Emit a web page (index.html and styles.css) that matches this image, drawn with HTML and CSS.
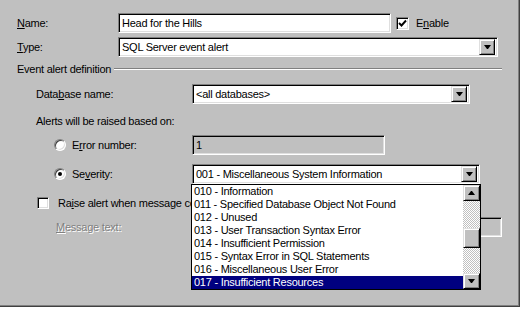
FILE: index.html
```html
<!DOCTYPE html>
<html>
<head>
<meta charset="utf-8">
<link rel="stylesheet" href="styles.css">
</head>
<body>
<div class="dialog">
  <div class="row row-name">
    <span class="lbl lbl-top"><u>N</u>ame:</span>
    <div class="field name-field">Head for the Hills</div>
    <span class="check enable-check"><svg width="9" height="9" viewBox="0 0 9 9"><path d="M1 4 L3.5 6.5 L8 1.5" fill="none" stroke="#000" stroke-width="1.9"/></svg></span>
    <span class="check-label">E<u>n</u>able</span>
  </div>
  <div class="row row-type">
    <span class="lbl lbl-top"><u>T</u>ype:</span>
    <div class="combo type-combo"><span class="combo-text">SQL Server event alert</span><span class="drop-btn"><svg width="7" height="4" viewBox="0 0 7 4"><polygon points="0,0 7,0 4,4 3,4" fill="#000"/></svg></span></div>
  </div>
  <div class="row row-heading">
    <span class="heading-text">Event alert definition</span>
    <span class="etched"></span>
  </div>
  <div class="row row-db">
    <span class="lbl lbl-db">Data<u>b</u>ase name:</span>
    <div class="combo db-combo"><span class="combo-text">&lt;all databases&gt;</span><span class="drop-btn"><svg width="7" height="4" viewBox="0 0 7 4"><polygon points="0,0 7,0 4,4 3,4" fill="#000"/></svg></span></div>
  </div>
  <div class="row row-alerts">Alerts will be raised based on:</div>
  <div class="row row-error">
    <span class="radio"></span>
    <span class="lbl lbl-radio">E<u>r</u>ror number:</span>
    <div class="field disabled error-field">1</div>
  </div>
  <div class="row row-sev">
    <span class="radio selected"></span>
    <span class="lbl lbl-radio">Se<u>v</u>erity:</span>
    <div class="combo sev-combo"><span class="combo-text">001 - Miscellaneous System Information</span><span class="drop-btn"><svg width="7" height="4" viewBox="0 0 7 4"><polygon points="0,0 7,0 4,4 3,4" fill="#000"/></svg></span></div>
  </div>
  <div class="row row-raise">
    <span class="check raise-check"></span>
    <span class="check-label raise-label">Ra<u>i</u>se alert when message contains:</span>
  </div>
  <div class="row row-msg">
    <span class="lbl lbl-msg disabled-text"><u>M</u>essage text:</span>
    <div class="field disabled msg-field"></div>
  </div>

  <div class="droplist">
    <ul class="items">
      <li>010 - Information</li>
      <li>011 - Specified Database Object Not Found</li>
      <li>012 - Unused</li>
      <li>013 - User Transaction Syntax Error</li>
      <li>014 - Insufficient Permission</li>
      <li>015 - Syntax Error in SQL Statements</li>
      <li>016 - Miscellaneous User Error</li>
      <li class="sel">017 - Insufficient Resources</li>
    </ul>
    <div class="scrollbar">
      <div class="sb-btn"><svg width="7" height="4" viewBox="0 0 7 4"><polygon points="3,0 4,0 7,4 0,4" fill="#000"/></svg></div>
      <div class="sb-track"><div class="sb-thumb"></div></div>
      <div class="sb-btn"><svg width="7" height="4" viewBox="0 0 7 4"><polygon points="0,0 7,0 4,4 3,4" fill="#000"/></svg></div>
    </div>
  </div>
</div>
</body>
</html>
```
FILE: styles.css
```css
html, body {
  margin: 0;
  padding: 0;
  background: #ffffff;
}
body {
  font-family: "Liberation Sans", Arial, sans-serif;
  font-size: 11px;
  letter-spacing: -0.25px;
  color: #000;
}
.dialog {
  position: relative;
  width: 520px;
  height: 307px;
  box-sizing: border-box;
  background: #c0c0c0;
  border-right: 1px solid #404040;
  border-bottom: 1px solid #404040;
  box-shadow: inset -1px -1px 0 #808080;
  padding: 13px 0 0 17px;
  display: flex;
  flex-direction: column;
  align-items: flex-start;
}
.row {
  display: flex;
  align-items: center;
  flex: none;
}
u { text-decoration: underline; text-underline-offset: 1px; }

.lbl { flex: none; white-space: nowrap; }
.lbl-top { width: 101px; }

.field {
  box-sizing: border-box;
  height: 20px;
  background: #fff;
  border: 1px solid;
  border-color: #808080 #fff #fff #808080;
  box-shadow: inset 1px 1px 0 #000, inset -1px -1px 0 #dfdfdf;
  padding: 0 0 0 3px;
  line-height: 18px;
  white-space: nowrap;
  overflow: hidden;
}
.field.disabled { background: #c0c0c0; }
.name-field { width: 273px; }

.check {
  box-sizing: border-box;
  width: 13px;
  height: 13px;
  background: #fff;
  border: 1px solid;
  border-color: #808080 #fff #fff #808080;
  box-shadow: inset 1px 1px 0 #000, inset -1px -1px 0 #dfdfdf;
  display: flex;
  align-items: center;
  justify-content: center;
  flex: none;
}
.enable-check { margin-left: 5px; }
.check-label { margin-left: 7px; white-space: nowrap; }

.row-type { margin-top: 4px; }
.combo {
  box-sizing: border-box;
  height: 20px;
  background: #fff;
  border: 1px solid;
  border-color: #808080 #fff #fff #808080;
  box-shadow: inset 1px 1px 0 #000, inset -1px -1px 0 #dfdfdf;
  padding: 2px;
  display: flex;
  align-items: center;
}
.combo-text {
  flex: 1;
  padding-left: 1px;
  white-space: nowrap;
  overflow: hidden;
}
.drop-btn, .sb-btn {
  box-sizing: border-box;
  width: 16px;
  height: 16px;
  background: #c0c0c0;
  border: 1px solid;
  border-color: #dfdfdf #000 #000 #dfdfdf;
  box-shadow: inset 1px 1px 0 #fff, inset -1px -1px 0 #808080;
  display: flex;
  align-items: center;
  justify-content: center;
  flex: none;
}
.drop-btn svg, .sb-btn svg { display: block; }
.type-combo { width: 380px; }

.row-heading {
  margin-top: 5px;
  height: 13px;
  width: 485px;
}
.heading-text { white-space: nowrap; }
.etched {
  flex: 1;
  margin-left: 3px;
  height: 0;
  border-top: 1px solid #808080;
  border-bottom: 1px solid #fff;
}

.row-db { margin-top: 9px; padding-left: 19px; }
.lbl-db { width: 156px; }
.db-combo { width: 278px; }

.row-alerts { margin-top: 10px; padding-left: 19px; height: 13px; white-space: nowrap; }

.row-error { margin-top: 8px; padding-left: 37px; }
.radio {
  box-sizing: border-box;
  position: relative;
  width: 12px;
  height: 12px;
  border-radius: 50%;
  background: #fff;
  border: 1px solid;
  border-color: #808080 #fff #fff #808080;
  box-shadow: inset 1px 1px 0 #404040, inset -1px -1px 0 #dfdfdf;
  flex: none;
  margin-right: 6px;
}
.radio.selected::after {
  content: "";
  position: absolute;
  left: 3px;
  top: 3px;
  width: 4px;
  height: 4px;
  border-radius: 50%;
  background: #000;
}
.lbl-radio { width: 120px; }
.error-field { width: 193px; }

.row-sev { margin-top: 9px; padding-left: 37px; }
.sev-combo { width: 288px; }

.row-raise { margin-top: 12px; padding-left: 20px; height: 13px; }
.raise-check { width: 12px; height: 12px; }
.raise-label {
  margin-left: 9px;
  width: 133px;
  overflow: hidden;
}

.row-msg { margin-top: 8px; padding-left: 39px; }
.lbl-msg { width: 136px; }
.disabled-text { color: #808080; text-shadow: 1px 1px 0 #fff; }
.msg-field { width: 310px; }

.droplist {
  position: absolute;
  left: 191px;
  top: 184px;
  width: 290px;
  height: 106px;
  box-sizing: border-box;
  border: 1px solid #000;
  background: #fff;
  display: flex;
}
.items {
  list-style: none;
  margin: 0;
  padding: 0;
  flex: 1;
}
.items li {
  height: 13px;
  line-height: 13px;
  padding-left: 2px;
  white-space: nowrap;
}
.items li.sel { background: #000080; color: #fff; }
.scrollbar {
  width: 17px;
  display: flex;
  flex-direction: column;
}
.sb-btn { width: 17px; }
.sb-track {
  flex: 1;
  background: repeating-conic-gradient(#fff 0 25%, #c0c0c0 0 50%) 0 0 / 2px 2px;
}
.sb-thumb {
  box-sizing: border-box;
  margin-top: 27px;
  height: 20px;
  background: #c0c0c0;
  border: 1px solid;
  border-color: #dfdfdf #000 #000 #dfdfdf;
  box-shadow: inset 1px 1px 0 #fff, inset -1px -1px 0 #808080;
}
```
